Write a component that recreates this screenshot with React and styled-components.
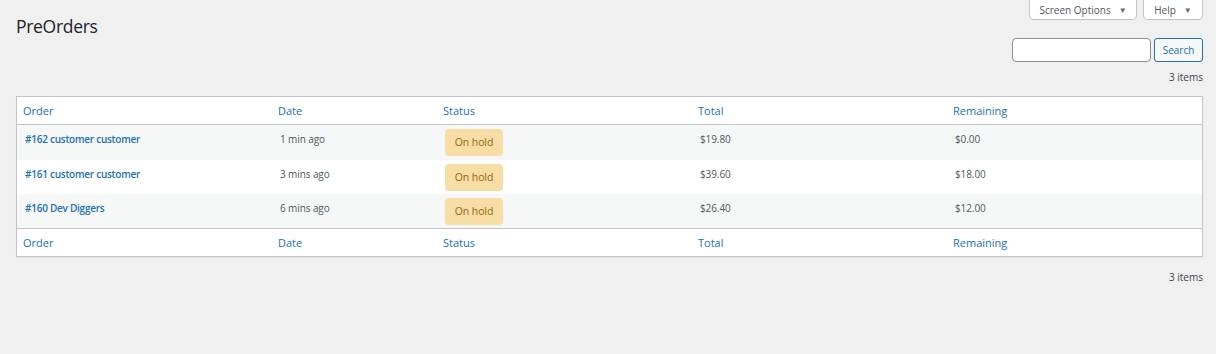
import React from "react";
import styled, { createGlobalStyle } from "styled-components";

const Global = createGlobalStyle`
  html, body { margin: 0; padding: 0; background: #f0f0f1; }
  body { font-family: "Open Sans", "Noto Sans", sans-serif; color: #3c434a; }
  * { box-sizing: border-box; }
`;

const Page = styled.div`
  width: 1216px;
  height: 354px;
  padding: 0 13px 0 16px;
  display: flex;
  flex-direction: column;
`;

const TopBar = styled.div`
  display: flex;
  justify-content: flex-end;
  gap: 6px;
  height: 20px;
`;

const TabButton = styled.button`
  height: 21px;
  margin-top: -1px;
  padding: 0;
  background: #fff;
  border: 1px solid #c3c4c7;
  border-radius: 0 0 4px 4px;
  font-family: inherit;
  font-size: 10px;
  white-space: nowrap;
  color: #50575e;
  display: flex;
  align-items: center;
  gap: 8px;
  width: ${(p) => p.$w}px;
  justify-content: center;
`;

const Caret = styled.span`
  font-size: 8px;
  color: #646970;
`;

const Title = styled.h1`
  margin: -6px 0 0 0;
  font-size: 17.5px;
  font-weight: 400;
  color: #1d2327;
  letter-spacing: -0.3px;
  line-height: 24px;
`;

const SearchRow = styled.div`
  display: flex;
  justify-content: flex-end;
  gap: 3px;
`;

const SearchInput = styled.input`
  width: 139px;
  height: 24px;
  border: 1px solid #8c8f94;
  border-radius: 4px;
  background: #fff;
`;

const SearchButton = styled.button`
  width: 49px;
  height: 24px;
  border: 1px solid #2271b1;
  border-radius: 3px;
  background: #f6f7f7;
  color: #2271b1;
  font-family: inherit;
  font-size: 10px;
  padding: 0;
`;

const Count = styled.div`
  text-align: right;
  font-size: 10px;
  color: #3c434a;
  height: ${(p) => p.$h}px;
  line-height: ${(p) => p.$h}px;
  margin-top: ${(p) => p.$mt}px;
`;

const Table = styled.div`
  margin-top: 12px;
  width: 1187px;
  border: 1px solid #c3c4c7;
  background: #fff;
  box-shadow: 0 1px 1px rgba(0, 0, 0, 0.04);
`;

const cols = "255px 165px 255px 255px 1fr";

const HeadRow = styled.div`
  display: grid;
  grid-template-columns: ${cols};
  height: 28px;
  align-items: center;
  ${(p) => (p.$foot ? "border-top: 1px solid #c3c4c7;" : "border-bottom: 1px solid #c3c4c7;")}
`;

const HeadCell = styled.div`
  padding-left: 6px;
  font-size: 11px;
  color: #2271b1;
`;

const Row = styled.div`
  display: grid;
  grid-template-columns: ${cols};
  height: ${(p) => p.$h}px;
  background: ${(p) => (p.$alt ? "#f6f7f7" : "#fff")};
  align-items: start;
`;

const Cell = styled.div`
  padding-left: 8px;
  padding-top: 7px;
  font-size: 10px;
  line-height: 15px;
  color: #50575e;
  letter-spacing: -0.1px;
`;

const OrderLink = styled.a`
  color: #2271b1;
  font-weight: 600;
  font-size: 10px;
  letter-spacing: -0.25px;
  text-decoration: none;
`;

const Badge = styled.span`
  display: inline-flex;
  align-items: center;
  justify-content: center;
  width: 58px;
  height: 27px;
  margin-top: -3px;
  background: #f8dda7;
  color: #94660c;
  border-radius: 4px;
  font-size: 10.5px;
`;

const rows = [
  { order: "#162 customer customer", date: "1 min ago", total: "$19.80", rem: "$0.00", h: 35 },
  { order: "#161 customer customer", date: "3 mins ago", total: "$39.60", rem: "$18.00", h: 34 },
  { order: "#160 Dev Diggers", date: "6 mins ago", total: "$26.40", rem: "$12.00", h: 34 },
];

const headers = ["Order", "Date", "Status", "Total", "Remaining"];

export default function App() {
  return (
    <Page>
      <Global />
      <TopBar>
        <TabButton $w={108}>
          Screen Options <Caret>▼</Caret>
        </TabButton>
        <TabButton $w={60}>
          Help <Caret>▼</Caret>
        </TabButton>
      </TopBar>
      <Title>PreOrders</Title>
      <SearchRow>
        <SearchInput />
        <SearchButton>Search</SearchButton>
      </SearchRow>
      <Count $h={14} $mt={8}>3 items</Count>
      <Table>
        <HeadRow>
          {headers.map((h) => (
            <HeadCell key={h}>{h}</HeadCell>
          ))}
        </HeadRow>
        {rows.map((r, i) => (
          <Row key={r.order} $alt={i % 2 === 0} $h={r.h}>
            <Cell>
              <OrderLink href="#">{r.order}</OrderLink>
            </Cell>
            <Cell>{r.date}</Cell>
            <Cell>
              <Badge>On hold</Badge>
            </Cell>
            <Cell>{r.total}</Cell>
            <Cell>{r.rem}</Cell>
          </Row>
        ))}
        <HeadRow $foot>
          {headers.map((h) => (
            <HeadCell key={h}>{h}</HeadCell>
          ))}
        </HeadRow>
      </Table>
      <Count $h={14} $mt={13}>3 items</Count>
    </Page>
  );
}
